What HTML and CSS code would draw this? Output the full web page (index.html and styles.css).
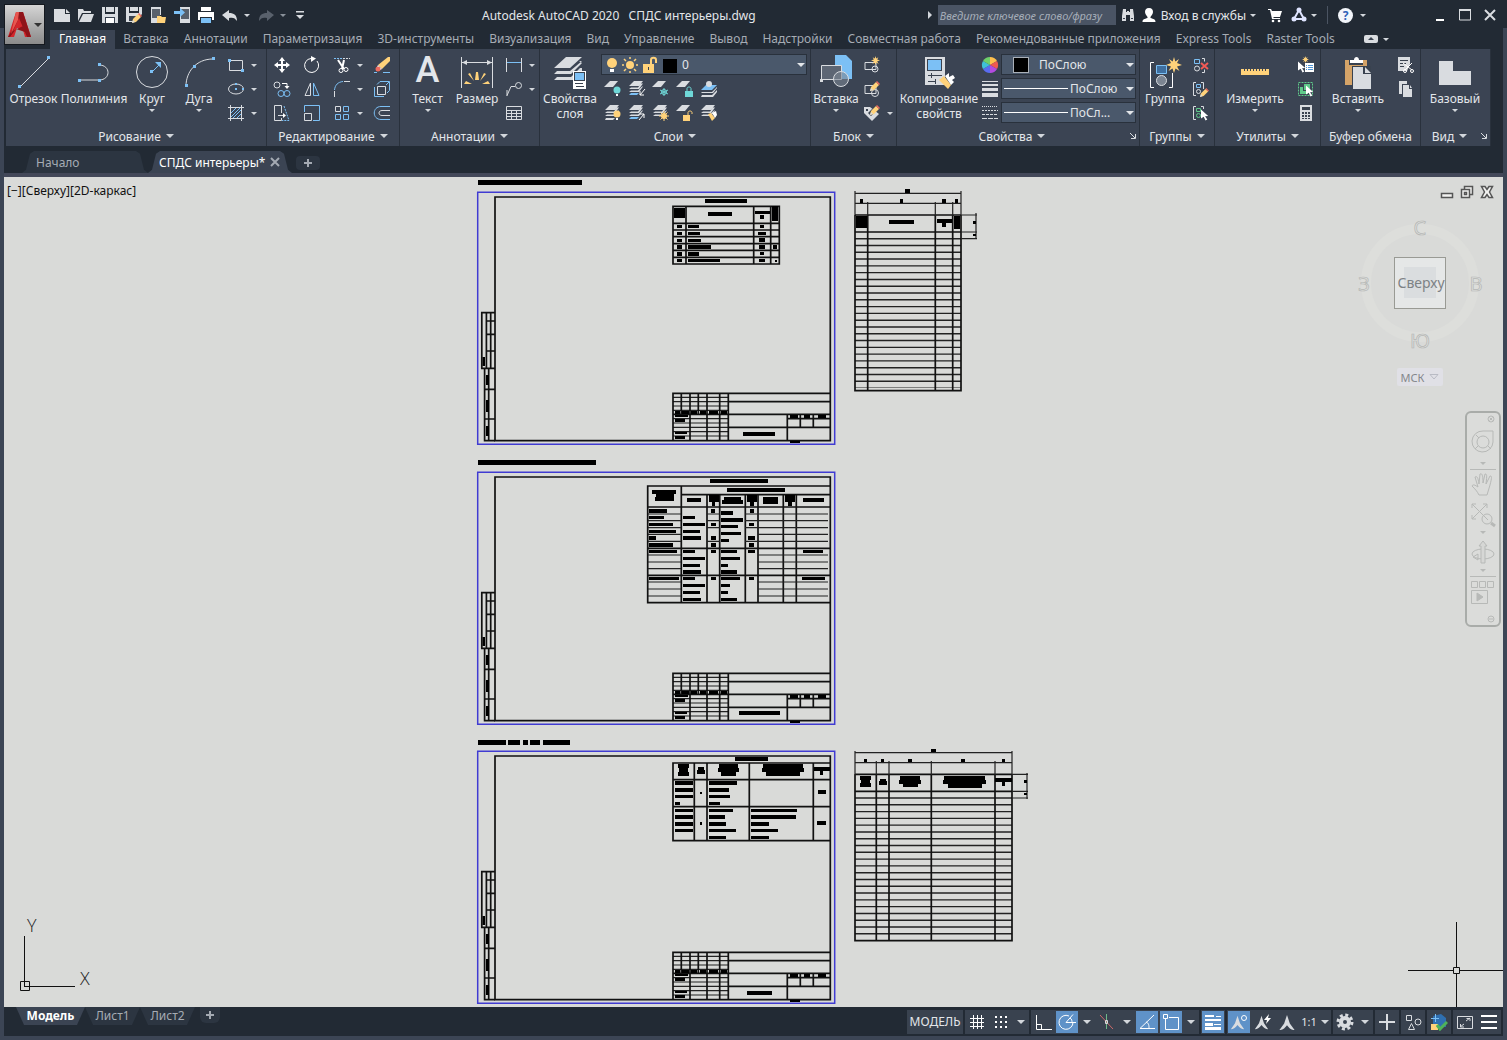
FILE: index.html
```html
<!DOCTYPE html>
<html lang="ru">
<head>
    <meta charset="UTF-8">
    <meta name="viewport" content="width=device-width, initial-scale=1.0">
    <title>Autodesk AutoCAD 2020 - СПДС интерьеры.dwg</title>
    <link rel="stylesheet" href="styles.css">
</head>
<body>
    <!-- Общие значки -->
    <svg class="defs" aria-hidden="true">
        <symbol id="layers" viewBox="0 0 18 18">
            <path class="fl" d="M6 1h9l-4 5H1zM3 7.500h7l3-4h2l-4 5.500H1zM3 10.500h7l4-4h1l-4 5.500H1z"/>
        </symbol>
        <symbol id="sheet1" viewBox="0 0 18 18"><path class="fl" d="M6 1h8L9 7H0z"/></symbol>
        <symbol id="pencil" viewBox="0 0 10 10">
            <path class="fy" d="M0 10l1-4 5-5 3 3-5 5z"/><path class="fr" d="M6 1l1-1 3 3-1 1z"/><path class="fl" d="M0 10l1-3 2 2z"/>
        </symbol>
        <symbol id="cursor" viewBox="0 0 10 12"><path class="fw" d="M0 0l8 7-3.500.500L7 11l-2 1-2-4-3 2z"/></symbol>
        <symbol id="spark" viewBox="0 0 16 16">
            <path class="fy" d="M8 0l1.300 4.500L13 2l-2 4 5 2-5 1.500L13.500 14 9.500 11.500 8 16 6.500 11.500 2.500 14 5 9.500 0 8l5-2-2-4 3.700 2.500z"/>
        </symbol>
        <symbol id="compass" viewBox="0 0 18 18"><path class="fl" d="M9 1l3 9 5 7c-3 0-5-1-8-5-3 4-5 5-8 5l5-7z"/></symbol>
    </svg>

    <header class="titlebar">
        <button class="app-button" aria-label="Меню приложения">
            <svg width="24" height="28" viewBox="0 0 24 28"><path fill="#d3262b" d="M8 1h7l8 25h-6l-2-7-6-2-3 9H0z"/><path fill="#8f1319" d="M11 1h4l8 25h-4L11 7 5 20l10-5 2 6-9-3-6 8H0l8-14z"/><path fill="#e8554f" d="M8 1h3l-1 8-7 14z"/></svg>
            <i class="arr dark"></i>
        </button>
        <div class="quick">
            <button aria-label="Создать"><svg width="18" height="18"><path class="fl" d="M1 3h11v5h5v8H1zM13 3l4 4h-4z"/></svg></button>
            <button aria-label="Открыть"><svg width="18" height="18"><path class="fl" d="M1 3h5l1 2h7v2H5l-4 8zM6 8h11l-3 8H2z"/></svg></button>
            <button aria-label="Сохранить"><svg width="18" height="18"><path class="fl" d="M1 1h3v7h10V1h3v16H1zM5 1h8v5H5z"/><path class="dk" d="M4 11h10v6H4z"/><path class="fw" d="M5 12h8v5H5z"/></svg></button>
            <button aria-label="Сохранить как"><svg width="18" height="18"><path class="fl" d="M1 1h3v6h10V1h3v7l-7 8H1zM5 1h8v4H5z"/><path class="dk" d="M4 10h8v5H4z"/><use href="#pencil" x="7" y="7" width="10" height="10"/></svg></button>
            <button aria-label="Открыть с устройства"><svg width="18" height="18"><path class="fl" d="M2 1h10v8H8v8H2z"/><path fill="#59616c" d="M3 3h8v9H3z"/><path class="fy" d="M8 10h4l1 1h4l-1 6H8z"/></svg></button>
            <button aria-label="Сохранить на устройстве"><svg width="18" height="18"><path class="fl" d="M7 1h10v16H7z"/><path fill="#59616c" d="M8 3h8v10H8z"/><path class="fb" d="M1 5h6V2l5 4.500L7 11V8H1z"/></svg></button>
            <button aria-label="Печать"><svg width="18" height="18"><path class="fw" d="M4 1h10v4H4zM1 6h16v8h-2v-3H3v3H1z"/><path class="fb" d="M4 12h10v5H4z"/></svg></button>
            <button aria-label="Отменить"><svg width="18" height="18"><path class="fl" d="M1 9l7-5v3c5 0 8 2 8 8-2-3-4-4-8-3v3z"/></svg></button>
            <i class="arr"></i>
            <button aria-label="Повторить"><svg width="18" height="18"><path fill="#59616c" d="M17 9l-7-5v3c-5 0-8 2-8 8 2-3 4-4 8-3v3z"/></svg></button>
            <i class="arr grey"></i>
            <button class="more" aria-label="Настройка панели"><svg width="10" height="10"><path class="fl" d="M1 1h8v1.500H1zM1 5h8L5 9z"/></svg></button>
        </div>
        <h1>Autodesk AutoCAD 2020 <span>СПДС интерьеры.dwg</span></h1>
        <div class="services">
            <i class="tri-right"></i>
            <input type="text" aria-label="Поиск" placeholder="Введите ключевое слово/фразу">
            <button class="w24" aria-label="Найти"><svg width="16" height="16"><path class="fl" d="M3 2h3v3h1V4h2v1h1V2h3l1 7v5h-4V8H6v6H2V9z"/><path class="dk" d="M3 11h2v1H3zM11 11h2v1h-2z"/></svg></button>
            <button class="sign"><svg width="16" height="16"><path class="fw" d="M8 1c3 0 4 2 4 4S10 9 9.500 10v1c3 1 5 1 5 4h-13c0-3 2-3 5-4v-1C6 9 4 7 4 5s1-4 4-4z"/></svg>Вход в службы<i class="arr"></i></button>
            <button class="w24" aria-label="Магазин"><svg width="16" height="16"><path class="fw" d="M1 2h3l1 2h10l-2 6H6l1 1h6v1H5L3 3H1z"/><circle class="fw" cx="6" cy="14" r="1.300"/><circle class="fw" cx="12" cy="14" r="1.300"/></svg></button>
            <button class="w24" aria-label="A360"><svg width="16" height="16"><path fill="none" stroke="#dfe4ff" stroke-width="2" d="M8 3l5 9H3z"/><circle fill="#dfe4ff" cx="8" cy="3" r="2.500"/><circle fill="#dfe4ff" cx="3" cy="12" r="2.500"/><circle fill="#dfe4ff" cx="13" cy="12" r="2.500"/></svg></button>
            <i class="arr"></i>
            <span class="divider"></span>
            <button class="help" aria-label="Справка">?</button>
            <i class="arr"></i>
        </div>
        <div class="window-buttons">
            <button aria-label="Свернуть"><svg width="14" height="14"><path class="fw" d="M3 11h8v2H3z"/></svg></button>
            <button aria-label="Развернуть"><svg width="14" height="14"><path class="sl" d="M1.500 2v10h11V2z"/><path class="fl" d="M1 1h12v2H1z"/></svg></button>
            <button aria-label="Закрыть"><svg width="14" height="14"><path class="sl thick" d="M2 2l10 10M12 2L2 12"/></svg></button>
        </div>
    </header>

    <div class="frame">
        <nav class="ribbon-tabs">
            <a href="#" class="active">Главная</a>
            <a href="#">Вставка</a>
            <a href="#">Аннотации</a>
            <a href="#">Параметризация</a>
            <a href="#">3D-инструменты</a>
            <a href="#">Визуализация</a>
            <a href="#">Вид</a>
            <a href="#">Управление</a>
            <a href="#">Вывод</a>
            <a href="#">Надстройки</a>
            <a href="#">Совместная работа</a>
            <a href="#">Рекомендованные приложения</a>
            <a href="#">Express Tools</a>
            <a href="#">Raster Tools</a>
            <button class="minimize" aria-label="Свернуть ленту"><svg width="14" height="8"><rect class="fl" width="14" height="8" rx="2"/><path class="dk" d="M4 5h6L7 2z"/></svg><i class="arr"></i></button>
        </nav>

        <div class="ribbon">
            <section class="panel p-draw">
                <div class="tools">
                    <button class="big w55"><svg width="34" height="34"><path class="sl" d="M3 32L32 3"/><path class="fb" d="M1 30h3v3H1zM30 1h3v3h-3z"/></svg>Отрезок</button>
                    <button class="big w66"><svg width="34" height="34"><path class="sl" d="M2 25h20c12 0 12-15 0-15"/><path class="fb" d="M1 24h3v3H1zM21 24h3v3h-3zM21 8h3v3h-3z"/></svg>Полилиния</button>
                    <button class="big w50"><svg width="34" height="34"><circle class="sl" cx="17" cy="17" r="15.500"/><path class="sb" d="M17 17l7-7"/><path class="fb" d="M15 15h3v3h-3zM26 7v6l-6-6z"/></svg>Круг<i class="arr"></i></button>
                    <button class="big w44"><svg width="34" height="34"><path class="sl" d="M4 31C4 17 14 4 31 4"/><path class="fb" d="M3 29h3v3H3zM11 10h3v3h-3zM30 2h3v3h-3z"/></svg>Дуга<i class="arr"></i></button>
                    <div class="grid g-drop">
                        <button class="drop" aria-label="Прямоугольник"><svg width="18" height="18"><path class="sl" d="M2.500 4.500h13v10h-13z"/><path class="fb" d="M1 3h3v3H1zM14 13h3v3h-3z"/></svg><i class="arr"></i></button>
                        <button class="drop" aria-label="Эллипс"><svg width="18" height="18"><ellipse class="sl" cx="9" cy="9" rx="7.500" ry="5"/><path class="fb" d="M8 8h2v2H8zM8 3h2v2H8zM15 8h2v2h-2z"/></svg><i class="arr"></i></button>
                        <button class="drop" aria-label="Штриховка"><svg width="18" height="18"><path class="sb" d="M4 9l5-5M4 13l9-9M6 14l8-8M10 14l4-4"/><path class="sl" d="M3.500 1v16M14.500 1v16M1 3.500h16M1 14.500h16"/></svg><i class="arr"></i></button>
                    </div>
                </div>
                <button class="caption">Рисование<i class="arr wide"></i></button>
            </section>

            <section class="panel p-edit">
                <div class="tools">
                    <div class="grid g-edit">
                        <button aria-label="Перенести"><svg width="18" height="18"><path class="fw" d="M9 1l3 4h-2v3h3V6l4 3-4 3v-2h-3v3h2l-3 4-3-4h2v-3H5v2L1 9l4-3v2h3V5H6z"/></svg></button>
                        <button aria-label="Повернуть"><svg width="18" height="18"><path class="sw" d="M14 5a7 7 0 1 1-6-2.500"/><path class="fw" d="M8 0l5 2.500L8 6z"/></svg></button>
                        <button class="drop" aria-label="Обрезать"><svg width="18" height="18"><path class="sb dash" d="M1 2.500h8"/><path class="sl dash" d="M10 2.500h7"/><path class="sw thick" d="M5 4l6 9M11 4l-2 9"/><circle class="sw" cx="8" cy="14.500" r="2"/><circle class="sw" cx="13" cy="13.500" r="2"/></svg><i class="arr"></i></button>
                        <button aria-label="Стереть"><svg width="18" height="18"><path class="fy" d="M15 1h2v4L9 13 5 9z"/><path class="fw" d="M5 9l4 4-2 1-3-3z"/><circle class="fr" cx="5" cy="13" r="2.500"/><path class="sb" d="M1 16.500h3M10 16.500h7"/></svg></button>
                        <button aria-label="Копировать"><svg width="18" height="18"><circle class="sl" cx="4" cy="5" r="3"/><circle class="sb" cx="8" cy="13.500" r="3"/><circle class="sb" cx="14" cy="13.500" r="3"/><path class="sw" d="M9 3.500h5V7"/><path class="fw" d="M11.500 6h5L14 9z"/></svg></button>
                        <button aria-label="Зеркало"><svg width="18" height="18"><path class="sl" d="M7.500 3v12.500H2z"/><path class="sb" d="M10.500 3v12.500H16z"/></svg></button>
                        <button class="drop" aria-label="Сопряжение"><svg width="18" height="18"><path class="sb" d="M1.500 10C2 5 5 2 10 1.500"/><path class="sl" d="M1.500 11v6M11 1.500h6"/></svg><i class="arr"></i></button>
                        <button aria-label="Расчленить"><svg width="18" height="18"><path class="sl" d="M4.500 6.500h8v8h-8z"/><path class="sb" d="M1.500 7v9.500H11M4 4.500l3-3h9.500v9L14 13M16 2l-3 3"/></svg></button>
                        <button aria-label="Растянуть"><svg width="18" height="18"><path class="sl" d="M8.500 9V1.500h-7v15h7V14M5 11.500h6"/><path class="fw" d="M10 9l3 2.500L10 14z"/><path class="sb dash" d="M11 2l5 14.500H9"/></svg></button>
                        <button aria-label="Масштаб"><svg width="18" height="18"><path class="sb" d="M1.500 8V1.500h15v15H10"/><path class="sl" d="M1.500 9.500h7v7h-7z"/></svg></button>
                        <button class="drop" aria-label="Массив"><svg width="18" height="18"><path class="sl" d="M2.500 2.500h5v5h-5z"/><path class="sb" d="M10.500 2.500h5v5h-5zM2.500 10.500h5v5h-5zM10.500 10.500h5v5h-5z"/></svg><i class="arr"></i></button>
                        <button aria-label="Подобие"><svg width="18" height="18"><path class="sb" d="M17 2.500H8c-9 0-9 13 0 13h9"/><path class="sl" d="M17 6.500H9c-4 0-4 5 0 5h8"/></svg></button>
                    </div>
                </div>
                <button class="caption">Редактирование<i class="arr wide"></i></button>
            </section>

            <section class="panel p-note">
                <div class="tools">
                    <button class="big w55"><span class="letter">A</span>Текст<i class="arr"></i></button>
                    <button class="big w44"><svg width="34" height="34"><path class="sl" d="M1.500 2v31M32.500 2v31M2 7.500h30"/><path class="fl" d="M2 7.500l5-2.500v5zM32 7.500L27 5v5z"/><path class="fy" d="M16 17h2l1 8h-4zM8 19l2-1 4 8zM26 19l-2-1-4 8zM4 29h8l-6-3zM30 29h-8l6-3z"/></svg>Размер</button>
                    <div class="grid g-drop">
                        <button class="drop" aria-label="Линейный"><svg width="18" height="18"><path class="sl" d="M1.500 2v14M16.500 2v14"/><path class="sb" d="M2 6.500h14"/></svg><i class="arr"></i></button>
                        <button class="drop" aria-label="Выноска"><svg width="18" height="18"><circle class="sl" cx="13.500" cy="5.500" r="3"/><path class="sl" d="M10 6.500H6l-4 9M2 10v6"/></svg><i class="arr"></i></button>
                        <button aria-label="Таблица"><svg width="18" height="18"><path class="sl" d="M1.500 2.500h15v13h-15zM2 6.500h14M2 9.500h14M2 12.500h14M6.500 6v9M11.500 6v9"/></svg></button>
                    </div>
                </div>
                <button class="caption">Аннотации<i class="arr wide"></i></button>
            </section>

            <section class="panel p-layers">
                <div class="tools">
                    <button class="big w60"><svg width="34" height="34"><path class="fl" d="M13 2h16L17 13H1zM4 16h13L29 6h-3l3 2-11 11H1zM4 22h14l9-9h2v3l-9 9H1z"/><path class="fw" d="M20 16h13v18H20z"/><path class="dk" d="M21 17h11v9H21zM22 28h8v1h-8zM23 31h8v1h-8z"/><path class="fb" d="M22 18h9v7h-9z"/></svg>Свойства слоя</button>
                    <div class="stack">
                        <label class="combo layer-combo">
                            <svg width="80" height="18" viewBox="0 0 80 18"><circle class="fy" cx="10" cy="7" r="5"/><path class="fw" d="M8 13h4v3H8z"/><circle class="fy" cx="28" cy="9" r="4"/><path stroke="#ffd27a" stroke-width="1.500" d="M28 1v2M28 15v2M20 9h2M34 9h2M22 3l2 2M34 3l-2 2M22 15l2-2M34 15l-2-2"/><path class="fy" d="M41 8h11v9H41z"/><path fill="none" stroke="#ffd27a" stroke-width="2" d="M49 8V4c0-3 5-3 5 0v3"/><path class="dk" d="M46 11h1v3h-1z"/><path d="M61 3h14v14H61z"/></svg>
                            <select aria-label="Слой"><option>0</option></select>
                        </label>
                        <div class="grid g-layer">
                            <button aria-label="Отключить"><svg width="18" height="18"><use href="#sheet1" width="18" height="18"/><circle class="fc" cx="13" cy="10" r="3.500"/><path class="fw" d="M12 14h2v2h-2z"/></svg></button>
                            <button aria-label="Изолировать"><svg width="18" height="18"><use href="#layers" width="18" height="18"/><path class="fb" d="M3 13h8l-2 2H1z"/><path class="sw" d="M17 9l-5 6M12 11v4h4"/></svg></button>
                            <button aria-label="Заморозить"><svg width="18" height="18"><use href="#sheet1" width="18" height="18"/><path class="sc" d="M12 8v8M8 10l8 4M16 10l-8 4"/><circle class="sc" cx="12" cy="12" r="2.500"/></svg></button>
                            <button aria-label="Блокировать"><svg width="18" height="18"><use href="#sheet1" width="18" height="18"/><path class="fc" d="M9 11h8v6H9z"/><path class="sc" d="M11 11V8.500c0-2 4-2 4 0V11"/></svg></button>
                            <button aria-label="Сделать текущим"><svg width="18" height="18"><path class="fb" d="M6 5h11l-5 5H1z"/><circle class="fl" cx="9" cy="4" r="3"/><path class="fl" d="M2 12h10l5-5v1l-4 5H1zM2 15h10l5-5v2l-4 5H1z"/></svg></button>
                            <button aria-label="Включить все"><svg width="18" height="18"><use href="#layers" width="18" height="18"/><path class="fl" d="M2 14h9l-2 2H1z"/><circle class="fy" cx="13" cy="10" r="3.500"/><path class="fw" d="M12 14h2v2h-2z"/></svg></button>
                            <button aria-label="Отменить изоляцию"><svg width="18" height="18"><use href="#layers" width="18" height="18"/><path class="fb" d="M3 13h8l-2 2H1z"/><path class="sw" d="M11 16l5-6M12 10h4v4"/></svg></button>
                            <button aria-label="Разморозить все"><svg width="18" height="18"><use href="#layers" width="18" height="18"/><circle class="fy" cx="12" cy="12" r="3"/><path class="sy" d="M12 7v10M7 12h10M8.500 8.500l7 7M15.500 8.500l-7 7"/></svg></button>
                            <button aria-label="Разблокировать"><svg width="18" height="18"><use href="#sheet1" width="18" height="18"/><path class="fy" d="M7 11h7v6H7z"/><path class="sy" d="M12 11V8.500c0-2 4-2 4 0V10"/></svg></button>
                            <button aria-label="Копировать свойства слоя"><svg width="18" height="18"><use href="#layers" width="18" height="18"/><path class="fy" d="M8 10l3-1 4 5-3 3z"/><path class="fw" d="M12 9l4-2 1 4-2 3z"/></svg></button>
                        </div>
                    </div>
                </div>
                <button class="caption">Слои<i class="arr wide"></i></button>
            </section>

            <section class="panel p-block">
                <div class="tools">
                    <button class="big w50"><svg width="34" height="34"><path class="fb" d="M16 0h11l6 6v18H16z"/><path fill="#5d6674" stroke="#d9dce0" d="M2.500 10.500h20v14h-20z"/><circle fill="#7c8592" fill-opacity=".6" stroke="#d9dce0" cx="22" cy="24" r="7.500"/><path class="fl" d="M1 24h3v3H1z"/></svg>Вставка<i class="arr"></i></button>
                    <div class="grid g-drop">
                        <button aria-label="Создать блок"><svg width="18" height="18"><path class="sl" d="M2 6.500h11v7H2z"/><circle class="sl" cx="12" cy="13" r="3"/><use href="#spark" x="8" y="0" width="9" height="9"/></svg></button>
                        <button aria-label="Редактор блоков"><svg width="18" height="18"><path class="sl" d="M2 5.500h11v8H2z"/><circle class="sl" cx="12" cy="13" r="3.500"/><use href="#pencil" x="7" y="1" width="10" height="10"/></svg></button>
                        <button class="drop" aria-label="Атрибуты"><svg width="18" height="18"><path class="fl" d="M1 3h6l9 7-7 7-8-8z"/><path class="dk" d="M3 5h2v2H3zM5 9l3 3 5-5-4-2z"/><use href="#pencil" x="7" y="1" width="10" height="10"/></svg><i class="arr"></i></button>
                    </div>
                </div>
                <button class="caption">Блок<i class="arr wide"></i></button>
            </section>

            <section class="panel p-props">
                <div class="tools">
                    <button class="big w84"><svg width="34" height="34"><path class="fl" d="M3 2h20v28H3z"/><path class="dk" d="M5 4h15v12H5zM6 20h14v1H6zM6 26h8v1H6zM9 18h1v5H9zM13 24h1v5h-1z"/><path class="fb" d="M6 5h13v10H6z"/><path class="fy" d="M17 25l5-4 7 9-3 4z"/><path class="fw" d="M23 21l4-3v4l4-2 2 3-3 2 2 2-3 3z"/></svg>Копирование свойств</button>
                    <div class="props-grid">
                        <svg width="18" height="18" viewBox="0 0 18 18"><path fill="#ffc04d" d="M9 9L9 1a8 8 0 0 1 7 4z"/><path fill="#ef5a50" d="M9 9l7-4a8 8 0 0 1 0 8z"/><path fill="#b44be0" d="M9 9l7 4a8 8 0 0 1-7 4z"/><path fill="#5a6cf0" d="M9 9v8a8 8 0 0 1-7-4z"/><path fill="#3fc1d8" d="M9 9l-7 4a8 8 0 0 1 0-8z"/><path fill="#6fd06a" d="M9 9L2 5a8 8 0 0 1 7-4z"/></svg>
                        <label class="combo"><i class="swatch"></i><select aria-label="Цвет"><option>ПоСлою</option></select></label>
                        <svg width="18" height="18"><path class="fl" d="M1 1h16v1H1zM1 4h16v2H1zM1 8h16v3H1zM1 13h16v4H1z"/></svg>
                        <label class="combo"><i class="line"></i><select aria-label="Вес линий"><option>ПоСлою</option></select></label>
                        <svg width="18" height="18"><path class="sl" stroke-dasharray="1 1" d="M1 2.500h16"/><path class="sl" stroke-dasharray="2 1" d="M1 6.500h16"/><path class="sl" stroke-dasharray="3 1" d="M1 10.500h16"/><path class="sl" stroke-dasharray="5 1" d="M1 14.500h16"/></svg>
                        <label class="combo"><i class="line"></i><select aria-label="Тип линий"><option>ПоСл...</option></select></label>
                    </div>
                </div>
                <div class="caption-row"><button class="caption">Свойства<i class="arr wide"></i></button><button class="launch" aria-label="Палитра свойств"><svg width="6" height="6"><path class="sl" d="M0 0l5 5M5.500 1v4.500H1"/></svg></button></div>
            </section>

            <section class="panel p-groups">
                <div class="tools">
                    <button class="big w50"><svg width="34" height="34"><path class="sw" d="M6 7.500H2.500v25H6M21 32.500h3.500V18"/><path fill="#3f6f9f" stroke="#7cc0f5" d="M8.500 10.500h10v8h-10z"/><circle fill="#7c8592" stroke="#d9dce0" cx="13.500" cy="25.500" r="5"/><use href="#spark" x="18" y="2" width="16" height="16"/></svg>Группа</button>
                    <div class="grid g-one">
                        <button aria-label="Разгруппировать"><svg width="18" height="18"><path class="sb" d="M2.500 3.500h5v4h-5z"/><circle class="sl" cx="5" cy="12.500" r="2.500"/><path class="sl" d="M10 2.500h2.500v3M10 16.500h2.500v-3"/><path stroke="#f25a55" stroke-width="2" d="M9 7l7 6M16 7l-7 6"/></svg></button>
                        <button aria-label="Редактировать группу"><svg width="18" height="18"><path class="sl" d="M4 2.500H1.500v13H4M9 2.500h2.500V9"/><path class="sb" d="M4.500 4.500h4v3h-4z"/><circle class="sl" cx="6.500" cy="11.500" r="2"/><use href="#pencil" x="8" y="8" width="9" height="9"/></svg></button>
                        <button aria-label="Выбор групп"><svg width="18" height="18"><path class="sl" d="M4 2.500H1.500v13H4M9 2.500h2.500V5"/><path class="sg" d="M4.500 4.500h4v3h-4z"/><circle class="sg" cx="6.500" cy="11.500" r="2"/><use href="#cursor" x="9" y="5" width="9" height="12"/></svg></button>
                    </div>
                </div>
                <button class="caption">Группы<i class="arr wide"></i></button>
            </section>

            <section class="panel p-utils">
                <div class="tools">
                    <button class="big w80"><svg width="34" height="34"><path class="fy" d="M3 14h28v6H3z"/><path stroke="#3b4453" d="M6.500 14v2M9.500 14v2M12.500 14v2M15.500 14v2M18.500 14v2M21.500 14v2M24.500 14v2M27.500 14v2"/></svg>Измерить<i class="arr"></i></button>
                    <div class="grid g-one">
                        <button aria-label="Быстрый выбор"><svg width="18" height="18"><use href="#cursor" x="1" y="5" width="9" height="12"/><use href="#spark" x="5" y="0" width="7" height="7"/><path class="fw" d="M8 7h9v9H8z"/><path stroke="#4d94d6" d="M9 9.500h1M11 9.500h5M9 11.500h1M11 11.500h5M9 13.500h1M11 13.500h5"/></svg></button>
                        <button aria-label="Выбрать все"><svg width="18" height="18"><path class="sg dash" d="M1.500 2.500h14v13h-14z"/><path fill="#5fc98a" d="M3 7h3v4h5v3H3zM7 4h6v6H7z"/><use href="#cursor" x="9" y="5" width="9" height="12"/></svg></button>
                        <button aria-label="Калькулятор"><svg width="18" height="18"><path class="fl" d="M3 1h12v16H3z"/><path class="dk" d="M5 3h8v3H5zM5 8h2v2H5zM8 8h2v2H8zM11 8h2v2h-2zM5 11h2v2H5zM8 11h2v2H8zM11 11h2v2h-2zM5 14h2v1H5zM8 14h2v1H8zM11 14h2v1h-2z"/></svg></button>
                    </div>
                </div>
                <button class="caption">Утилиты<i class="arr wide"></i></button>
            </section>

            <section class="panel p-clip">
                <div class="tools">
                    <button class="big w74"><svg width="34" height="34"><path fill="#d5a468" d="M4 5h22v25H4z"/><path class="dk" d="M8 5h14v5H8zM11 11h19v22H11z"/><path class="fw" d="M9 5h4c0-4 5-4 5 0h4v3H9z"/><path class="fl" d="M12 12h10v7h8v15H12zM24 12l6 6h-6z"/></svg>Вставить<i class="arr"></i></button>
                    <div class="grid g-one">
                        <button aria-label="Вырезать"><svg width="18" height="18"><path class="fl" d="M1 1h12v7l-3 7H1z"/><path class="dk" d="M3 4h8v1H3zM3 7h6v1H3zM3 10h4v1H3z"/><path class="sw" d="M6 7l9 7M15 7l-7 7"/><circle class="sw" cx="8" cy="15" r="1.500"/><circle class="sw" cx="15" cy="15" r="1.500"/></svg></button>
                        <button aria-label="Копировать"><svg width="18" height="18"><path class="fl" d="M2 1h8v3H5v10H2zM6 5h6v4h3v8H6zM13 5l2 3h-2z"/></svg></button>
                    </div>
                </div>
                <span class="caption">Буфер обмена</span>
            </section>

            <section class="panel p-view">
                <div class="tools">
                    <button class="big w68"><svg width="34" height="34"><path class="fl" d="M1 6h14v10h18v14H1z"/></svg>Базовый<i class="arr"></i></button>
                </div>
                <div class="caption-row"><button class="caption">Вид<i class="arr wide"></i></button><button class="launch" aria-label="Параметры вида"><svg width="6" height="6"><path class="sl" d="M0 0l5 5M5.500 1v4.500H1"/></svg></button></div>
            </section>
        </div>

        <nav class="file-tabs">
            <a href="#">Начало</a>
            <a href="#" class="active">СПДС интерьеры* <svg width="10" height="10"><path stroke="#a4aab3" stroke-width="2" d="M1 1l8 8M9 1L1 9"/></svg></a>
            <button aria-label="Новый чертеж"><svg width="10" height="10"><path stroke="#a4aab3" stroke-width="2" d="M5 1v8M1 5h8"/></svg></button>
        </nav>

        <main class="canvas">
            <!-- Чертеж: рамки листов, штампы и таблицы -->
            <svg class="drawing">
                <defs>
                    <g id="sheet">
                        <path class="border" d="M.7.300h357v252H.7z"/>
                        <path class="bold" d="M18 5h335.300v243.600H18z"/>
                        <path class="bold" d="M18 120.600H4.800v55.700H18M9.400 120v56M13.700 120v56M9 129h9M9 142.400h9M9 159h9M7.600 176v72.600H18M11.700 176v72M7.600 197.300H18M7.600 227H18"/>
                        <path class="ink" d="M5.500 165H8v9H5.500zM9 183h3v10H9zM9 208h3v12H9zM9 234h3v10H9z"/>
                        <path class="thin" d="M196 205.300h55M196 209.700h55M196 214h55M196 226.700h55M196 231h55M196 235.300h55M196 239.700h55M196 244h55M196 218.300h55"/>
                        <path class="bold" d="M353 201.300H196v47M204.300 201v21M213 201v47M221.300 201v21M230 201v47M242.700 201v47M251.300 201v47M251 209.700h102M196 222.300h157M251 235.300h102M310.300 222v26M310 226.700h43M323.300 222v13M336.300 222v13"/>
                        <path class="ink" d="M198 219h5v3h-5zM205 219h7v3h-7zM214 219h6v3h-6zM223 219h6v3h-6zM232 219h9v3h-9zM244 219h6v3h-6zM198 223h13v2h-13zM198 227h10v3h-10zM198 240h12v2h-12zM198 244h10v3h-10zM313 223h8v3h-8zM327 223h6v3h-6zM341 223h8v3h-8zM313 249h10v2h-10z"/>
                    </g>
                </defs>
                <!-- начало координат сдвинуто к углу окна -->
                <g transform="translate(-4 -177)">
                    <path class="ink" d="M478 180h104v5H478zM478 460h118v5H478zM478 740h28v5h-28zM508 740h12v5h-12zM523 740h5v5h-5zM530 740h10v5h-10zM543 740h27v5h-27z"/>

                    <g transform="translate(477 192)">
                        <use href="#sheet"/>
                        <path class="bold" d="M196 14.300h106.300V72H196zM209 14v58M276.700 14v58M293.700 14v58M196 31.300h106M196 38h106M196 44.700h106M196 51.700h106M196 58.300h106M196 65.300h106"/>
                        <path class="ink" d="M266 240h32v4h-32zM228 7h42v4h-42zM197 16h11v10h-11zM231 20h24v4h-24zM278 19h15v3h-15zM283 23h4v4h-4zM295 14h6v15h-6z"/>
                        <path class="ink" d="M200 33h5v3h-5zM200 40h5v3h-5zM200 47h5v3h-5zM200 53h5v4h-5zM200 60h5v4h-5zM200 67h5v3h-5zM211 33h11v3h-11zM211 40h12v3h-12zM211 47h13v3h-13zM211 53h23v4h-23zM211 60h11v4h-11zM211 67h32v3h-32z"/>
                        <path class="ink" d="M283 33h4v3h-4zM281 40h8v3h-8zM282 46h6v4h-6zM282 53h6v4h-6zM283 60h4v3h-4zM282 67h6v3h-6zM296 53h4v4h-4zM298 68h2v2h-2z"/>
                    </g>

                    <g transform="translate(477 472)">
                        <use href="#sheet"/>
                        <path class="bold" d="M353 14H170.700v116.700H353M204.300 14v117M204 22.700h149M170 35h183M230 22v109M242.700 22v109M268.300 22v109M281 22v109M306.300 22v109M319.300 22v109M170 76.300h183M170 103.300h183"/>
                        <path class="thin" d="M171 42h33M171 48.700h33M171 55.700h33M171 62.300h33M171 69.300h33M171 83h33M171 90h33M171 96.700h33M171 110h33M171 117h33M171 124h33M281 42h70M281 48.700h70M281 55.700h70M281 62.300h70M281 69.300h70M281 83h70M281 90h70M281 96.700h70M281 110h70M281 117h70M281 124h70M230 42h13M230 48.700h13M230 55.700h13M230 69.300h13M268 42h13M268 48.700h13M268 55.700h13M268 69.300h13"/>
                        <path class="ink" d="M262 239h41v4h-41zM233 7h58v4h-58zM250 16h58v4h-58zM175 18h24v4h-24zM179 22h18v3h-18zM178 25h19v4h-19zM210 26h14v4h-14zM232 23h10v7h-10zM235 30h3v4h-3zM247 25h17v3h-17zM245 28h21v4h-21zM270 23h10v7h-10zM273 30h4v4h-4zM286 25h15v7h-15zM308 23h10v7h-10zM311 30h4v4h-4zM326 26h21v4h-21z"/>
                        <path class="ink" d="M172 37h18v4h-18zM172 44h15v3h-15zM172 51h24v3h-24zM172 58h27v3h-27zM172 64h7v4h-7zM172 71h24v4h-24zM172 78h28v3h-28zM172 105h30v3h-30zM206 44h12v3h-12zM206 51h22v3h-22zM206 58h17v3h-17zM206 64h18v4h-18zM206 78h12v3h-12zM206 85h22v3h-22zM206 92h17v3h-17zM206 98h18v4h-18zM206 105h12v3h-12zM206 112h22v3h-22zM206 119h17v3h-17zM206 126h18v3h-18z"/>
                        <path class="ink" d="M234 37h4v4h-4zM234 51h5v3h-5zM234 64h5v4h-5zM234 71h5v4h-5zM234 78h5v3h-5zM234 105h5v3h-5zM244 39h12v4h-12zM244 46h22v4h-22zM244 53h17v3h-17zM244 60h20v3h-20zM244 67h8v3h-8zM244 78h16v3h-16zM244 85h19v3h-19zM244 92h7v3h-7zM244 98h16v4h-16zM244 105h19v3h-19zM244 112h9v3h-9zM244 119h7v3h-7zM244 126h16v3h-16z"/>
                        <path class="ink" d="M273 37h4v4h-4zM272 51h5v3h-5zM271 64h7v4h-7zM272 71h5v4h-5zM271 78h7v3h-7zM272 105h5v3h-5zM326 78h20v3h-20zM325 105h23v3h-23z"/>
                    </g>

                    <g transform="translate(477 751)">
                        <use href="#sheet"/>
                        <path class="bold" d="M353 12H196v77.600h157M217.300 12v78M230 12v78M272.300 12v78M336.300 12v78M196 28.600h157M196 55.600h157"/>
                        <path class="ink" d="M270 240h25v4h-25zM258 6h33v4h-33zM201 13h11v4h-11zM202 17h9v4h-9zM201 21h11v4h-11zM221 16h6v3h-6zM220 19h8v4h-8zM242 13h19v4h-19zM241 17h21v4h-21zM244 21h15v4h-15zM286 13h40v4h-40zM285 17h42v4h-42zM289 21h34v4h-34zM337 16h16v4h-16zM343 20h3v4h-3z"/>
                        <path class="ink" d="M198 30h18v4h-18zM198 37h18v4h-18zM198 44h18v3h-18zM198 51h5v3h-5zM232 30h28v4h-28zM232 37h20v4h-20zM232 44h21v3h-21zM232 51h11v3h-11zM223 41h2v2h-2zM341 39h8v4h-8zM198 58h18v3h-18zM198 64h18v4h-18zM198 71h18v4h-18zM198 78h18v3h-18zM223 71h2v3h-2zM340 70h9v4h-9z"/>
                        <path class="ink" d="M232 58h24v3h-24zM232 64h16v4h-16zM232 71h17v4h-17zM232 78h27v3h-27zM232 85h17v3h-17zM274 58h46v3h-46zM274 64h45v4h-45zM274 71h18v4h-18zM274 78h27v3h-27zM274 85h18v3h-18z"/>
                    </g>

                    <!-- пустая таблица с размерами, вверху справа -->
                    <path class="rows" stroke-width="106" d="M908 238v150"/>
                    <path class="bold" d="M855 215v175.600h106V215M867.700 215v175M935.300 215v175M952.700 215v175M855 215h106M855 232h106"/>
                    <path class="thin" d="M855 193.300h106M855 203.300h106M855 191v24M961 191v24M867.700 202v14M935.300 202v14M952.700 202v14M961 215h16M961 232h16M961 238.700h16M976 213v26"/>
                    <path class="ink" d="M905 189h5v4h-5zM860 199h3v4h-3zM900 199h3v4h-3zM942 199h4v4h-4zM955 199h3v4h-3zM856 216h11v12h-11zM889 220h25v4h-25zM937 219h15v4h-15zM942 223h4v4h-4zM954 216h6v13h-6zM973 221h3v3h-3zM973 234h3v2h-3z"/>

                    <!-- пустая таблица с размерами, внизу справа -->
                    <path class="rows" stroke-width="157" d="M933.500 797.300v138"/>
                    <path class="bold" d="M855 774.300v166.400h157V774.300M876.300 774v166M889 774v166M931.300 774v166M995 774v166M855 774.300h157M855 791.300h157"/>
                    <path class="thin" d="M855 752.700h157M855 762.700h157M855 751v24M1012 751v24M876.300 761v14M889 761v14M931.300 761v14M995 761v14M1012 774.300h16M1012 791.300h16M1012 798h16M1027 773v26"/>
                    <path class="ink" d="M931 749h5v3h-5zM864 759h3v3h-3zM881 759h3v3h-3zM908 759h4v3h-4zM961 759h4v3h-4zM1002 759h3v3h-3zM860 776h11v4h-11zM861 780h9v3h-9zM860 783h11v4h-11zM880 779h6v3h-6zM879 781h8v4h-8zM900 776h20v4h-20zM899 780h22v4h-22zM903 784h15v3h-15zM944 776h41v4h-41zM943 780h43v4h-43zM948 784h34v4h-34zM995 778h17v4h-17zM1002 782h3v4h-3zM1024 780h3v3h-3zM1024 793h3v2h-3z"/>
                </g>
            </svg>

            <div class="view-label">[−][Сверху][2D-каркас]</div>

            <svg class="ucs" width="80" height="86"><path class="hair" d="M4.500 26v50M4 76.500h51M.5 71.500h9v9h-9z"/><text x="7" y="22">Y</text><text x="60" y="75">X</text></svg>

            <div class="doc-buttons">
                <button aria-label="Свернуть"><svg width="14" height="14"><path class="doc" d="M1.500 8.500h11v4h-11z"/></svg></button>
                <button aria-label="Восстановить"><svg width="14" height="14"><path class="doc" d="M4.500 4V1.500h8v8H10M1.500 4.500h8v8h-8z"/><path class="doc" d="M4.500 7.500h2v2h-2z"/></svg></button>
                <button aria-label="Закрыть"><svg width="14" height="14"><path class="doc" d="M1.500 1.500H5l2 3 2-3h3.500L9.500 7l3 5.500H9l-2-3-2 3H1.500l3-5.500z"/></svg></button>
            </div>

            <div class="viewcube">
                <svg width="130" height="140" viewBox="0 0 130 140">
                    <circle class="ring" cx="65" cy="68" r="54"/>
                    <rect class="face" x="39.500" y="42.500" width="51" height="51"/>
                    <rect fill="#dadddf" x="49" y="52" width="32" height="31"/>
                    <text class="side" x="65" y="20">С</text>
                    <text class="side" x="9" y="76">З</text>
                    <text class="side" x="121" y="76">В</text>
                    <text class="side" x="65" y="133">Ю</text>
                    <text class="top" x="66" y="73">Сверху</text>
                </svg>
                <button class="wcs">МСК <svg width="10" height="6"><path fill="none" stroke="#b9bbc4" d="M1 .5h8L5 5z"/></svg></button>
            </div>

            <div class="navbar">
                <svg class="nav-end" width="8" height="8"><circle cx="4" cy="4" r="3"/><path d="M2.500 2.500l3 3M5.500 2.500l-3 3"/></svg>
                <button aria-label="Штурвал"><svg width="26" height="26"><path d="M13 2h10v11a10.500 10.500 0 1 1-10-11z"/><circle cx="13" cy="13" r="6"/><path d="M5 20l3-3M18 17l3 3M6 6l3 3"/></svg></button>
                <i class="arr pale"></i>
                <hr>
                <button aria-label="Панорамирование"><svg width="26" height="26"><path d="M9 23c-2-4-4-6-7-9 1-2 3-1 6 1L5 5c2-1 3 0 4 7l1-10c2-1 3 1 3 9l2-9c2 0 2 1 1 10l4-8c2 0 2 1 0 9l-3 10z"/></svg></button>
                <button aria-label="Зумирование"><svg width="26" height="26"><path d="M2 2l16 16M17 2L2 17M2 6V2h4M13 2h4v4M2 13v4h4"/><circle cx="17" cy="17" r="5"/><path stroke-width="3" d="M21 21l4 3"/></svg></button>
                <i class="arr pale"></i>
                <button aria-label="Орбита"><svg width="26" height="26"><ellipse cx="13" cy="14" rx="11" ry="5"/><path fill="#d6d7d5" d="M11 23V6H9l4-5 4 5h-2v17z"/><path d="M3 17l5-3v6z"/></svg></button>
                <i class="arr pale"></i>
                <hr>
                <button aria-label="Аниматор"><svg width="26" height="26"><path d="M1.500 2.500h6v6h-6zM9.500 2.500h6v6h-6zM17.500 2.500h6v6h-6zM1.500 11.500h16v13h-16z"/><path fill="#b7b9b7" d="M7 14l6 4-6 4z"/></svg></button>
                <svg class="nav-end" width="8" height="8"><circle cx="4" cy="4" r="3"/><path d="M2 4h4"/></svg>
            </div>

            <svg class="crosshair" width="95" height="85"><path class="hair" d="M48.500 0v45M48.500 52v33M0 48.500h45M52 48.500h43M45.500 45.500h6v6h-6z"/></svg>
        </main>

        <footer class="statusbar">
            <nav class="layout-tabs">
                <a href="#" class="active">Модель</a>
                <a href="#">Лист1</a>
                <a href="#">Лист2</a>
                <button aria-label="Новый лист"><svg width="8" height="8"><path stroke="#a4aab3" stroke-width="2" d="M4 0v8M0 4h8"/></svg></button>
            </nav>
            <div class="modes">
                <div class="group"><button class="model">МОДЕЛЬ</button></div>
                <div class="group">
                    <button aria-label="Сетка"><svg width="18" height="18"><path class="sw" d="M5.500 2v14M9.500 2v14M13.500 2v14M2 5.500h14M2 9.500h14M2 13.500h14"/></svg></button>
                    <button aria-label="Привязка"><svg width="18" height="18"><path class="fw" d="M3 3h2v2H3zM8 3h2v2H8zM13 3h2v2h-2zM3 8h2v2H3zM8 8h2v2H8zM13 8h2v2h-2zM3 13h2v2H3zM8 13h2v2H8zM13 13h2v2h-2z"/></svg></button>
                    <button class="tiny" aria-label="Параметры привязки"><i class="arr mid"></i></button>
                </div>
                <div class="group">
                    <button aria-label="Орто"><svg width="18" height="18"><path class="sw" d="M2.500 2v14.500H18M2.500 11.500h5v5"/></svg></button>
                    <button class="on" aria-label="Полярное отслеживание"><svg width="18" height="18"><path class="sw" d="M15 9a7 7 0 1 1-4-6M8 9.500l7-8M8 9.500h10M12 5c2 1 2 3 2 5"/></svg></button>
                    <button class="tiny" aria-label="Параметры отслеживания"><i class="arr mid"></i></button>
                    <button aria-label="Изометрия"><svg width="18" height="18"><path stroke="#6fb98a" d="M8.500 1v15"/><path stroke="#cc6a6a" d="M2 2l13 14"/><path class="sl" d="M7.500 7.500h2v3h-2z"/></svg></button>
                    <button class="tiny" aria-label="Изоплоскость"><i class="arr mid"></i></button>
                    <button class="on" aria-label="Объектное отслеживание"><svg width="18" height="18"><path class="sw" d="M16 2L2 15.500h15M8 9c3 1 3 4 3 6"/></svg></button>
                    <button class="on" aria-label="Объектная привязка"><svg width="18" height="18"><path class="sw" d="M3.500 6v10.500h13V4.500H7M1.500 1.500h4v4h-4z"/></svg></button>
                    <button class="tiny" aria-label="Параметры объектной привязки"><i class="arr mid"></i></button>
                </div>
                <div class="group">
                    <button class="on" aria-label="Вес линий"><svg width="18" height="18"><path class="fw" d="M1 2h9v2H1zM1 6h16v2H1zM1 10h8v3H1zM1 14h16v3H1zM12 3h5v1h-5zM10 11h7v1h-7z"/></svg></button>
                </div>
                <div class="group">
                    <button class="on" aria-label="Видимость аннотаций"><svg width="18" height="18"><use href="#compass" y="1" width="15" height="17"/><circle class="sw" cx="14" cy="5" r="2.500"/></svg></button>
                    <button aria-label="Автомасштаб"><svg width="18" height="18"><use href="#compass" y="1" width="15" height="17"/><path class="fw" d="M15 1l-5 6h3l-1 4 5-6h-3z"/></svg></button>
                    <button aria-label="Масштаб аннотаций"><svg width="18" height="18"><use href="#compass" y="1" width="18" height="17"/></svg></button>
                    <button class="scale">1:1 <i class="arr mid"></i></button>
                </div>
                <div class="group">
                    <button aria-label="Рабочее пространство"><svg width="18" height="18"><circle fill="none" stroke="#d9dce0" stroke-width="4" cx="9" cy="9" r="4"/><circle fill="none" stroke="#d9dce0" stroke-width="3" stroke-dasharray="3 2.500" cx="9" cy="9" r="7"/></svg></button>
                    <button class="tiny" aria-label="Список пространств"><i class="arr mid"></i></button>
                </div>
                <div class="group">
                    <button aria-label="Монитор аннотаций"><svg width="18" height="18"><path class="fl" d="M8 1h2v7h7v2h-7v7H8v-7H1V8h7z"/></svg></button>
                </div>
                <div class="group">
                    <button aria-label="Изоляция объектов"><svg width="18" height="18"><path class="sl" d="M2.500 2.500h5v5h-5zM4.500 16.500h6l-3-6z"/><circle class="sl" cx="14" cy="9" r="3"/></svg></button>
                </div>
                <div class="group">
                    <button aria-label="Аппаратное ускорение"><svg width="18" height="18"><path fill="#2f6fb0" d="M3 3l8-2 5 4v9H3z"/><path class="sb" d="M1 5.500h8M5.500 1v8"/><path class="fy" d="M1 11h7v6H1z"/><path fill="none" stroke="#4fb35a" stroke-width="3" d="M7 12l3 4 7-7"/></svg></button>
                </div>
                <div class="group">
                    <button aria-label="Очистить экран"><svg width="18" height="18"><path class="sl" d="M1.500 3.500h15v12h-15zM10 8l4-3M10.500 5.500H14V8M8 11l-4 3M4.500 11v3H8"/></svg></button>
                    <button aria-label="Адаптация"><svg width="18" height="18"><path class="fw" d="M1 2h16v2H1zM1 8h16v2H1zM1 14h16v2H1z"/></svg></button>
                </div>
            </div>
        </footer>
    </div>
</body>
</html>
```
FILE: styles.css
```css
* {
    box-sizing: border-box;
}
body {
    display: flex;
    flex-direction: column;
    min-height: 100vh;
    margin: 0;
    background: #222a34;
    color: #e3e6ea;
    font: 12px/15px "Noto Sans", sans-serif;
}
button {
    display: flex;
    align-items: center;
    justify-content: center;
    margin: 0;
    padding: 0;
    border: 0;
    background: none;
    color: inherit;
    font: inherit;
}
a {
    color: inherit;
    text-decoration: none;
}
svg {
    display: block;
    flex: none;
}
.defs {
    position: absolute;
    width: 0;
    height: 0;
}

/* Цвета значков */
.fl { fill: #d9dce0; }
.fw { fill: #fff; }
.fb { fill: #7cc0f5; }
.fy { fill: #ffd27a; }
.fr { fill: #ee6a5e; }
.fc { fill: #6fd8d8; }
.dk { fill: #39424f; }
.sl, .sw, .sb, .sc, .sy, .sg { fill: none; stroke: #d9dce0; }
.sw { stroke: #fff; }
.sb { stroke: #7cc0f5; }
.sc { stroke: #6fd8d8; }
.sy { stroke: #ffd27a; }
.sg { stroke: #5fc98a; }
.thick { stroke-width: 2; }
.dash { stroke-dasharray: 2 1; }

.arr {
    flex: none;
    width: 0;
    height: 0;
    border: 3px solid transparent;
    border-top-color: #d3d7dc;
    border-bottom: 0;
}
.arr.wide, .arr.mid { border-width: 4px 4px 0; }
.arr.dark { border-top-color: #333; border-width: 4px 4px 0; }
.arr.grey { border-top-color: #8a919a; }
.arr.pale { border-top-color: #b7b9b7; }

/* Заголовок окна */
.titlebar {
    position: relative;
    display: flex;
    align-items: center;
    height: 28px;
    padding: 2px 5px 0 50px;
}
.app-button {
    position: absolute;
    z-index: 1;
    left: 5px;
    top: 5px;
    width: 39px;
    height: 39px;
    gap: 2px;
    background: linear-gradient(#d5d5d5, #8a8a8a);
    box-shadow: 0 0 0 1px #15191f;
}
.quick {
    display: flex;
    align-items: center;
}
.quick button {
    width: 24px;
    height: 24px;
}
.quick .arr + button {
    margin-left: 4px;
}
.quick .arr {
    margin-left: 2px;
}
.quick .more {
    width: 20px;
}
h1 {
    flex: 1;
    margin: 0;
    font-size: 12px;
    font-weight: normal;
    text-align: center;
}
h1 span {
    margin-left: 6px;
}
.services {
    display: flex;
    align-items: center;
}
.tri-right {
    border: 4px solid transparent;
    border-left-color: #d3d7dc;
    border-right: 0;
    margin-right: 6px;
}
.services input {
    width: 178px;
    height: 20px;
    padding: 0 2px;
    border: 0;
    background: #4a5464;
    color: #e3e6ea;
    font: italic 11px "Noto Sans", sans-serif;
}
.services input::placeholder {
    color: #a5adb8;
    opacity: 1;
}
.w24 {
    width: 24px;
}
.sign {
    gap: 4px;
    margin: 0 7px 0 1px;
}
.divider {
    width: 1px;
    height: 18px;
    margin: 0 10px;
    background: #4b5462;
}
.help {
    width: 15px;
    height: 15px;
    margin-right: 7px;
    border-radius: 50%;
    background: #f2f5fa;
    color: #2f62b8;
    font-weight: bold;
}
.window-buttons {
    display: flex;
    margin-left: 61px;
}
.window-buttons button {
    width: 25px;
}

/* Лента */
.frame {
    display: flex;
    flex: 1;
    flex-direction: column;
    border: solid #3c4555;
    border-width: 0 4px 4px;
}
.ribbon-tabs {
    display: flex;
    align-items: flex-end;
    height: 21px;
    padding-left: 46px;
    color: #a6acb4;
}
.ribbon-tabs a {
    height: 19px;
    padding: 0 7px 0 8px;
    line-height: 18px;
    white-space: nowrap;
}
.ribbon-tabs a.active {
    padding: 0 9px;
    background: #3b4453;
    color: #fff;
}
.minimize {
    gap: 5px;
    height: 20px;
    margin-left: 22px;
}
.ribbon {
    display: flex;
    margin: 0 2px;
}
.panel {
    display: flex;
    flex: none;
    flex-direction: column;
    height: 97px;
    border-right: 1px solid #29313c;
    background: #3b4453;
}
.p-draw { width: 261px; }
.p-edit { width: 133px; }
.p-note { width: 140px; }
.p-layers { width: 271px; }
.p-block { width: 86px; }
.p-props { width: 243px; }
.p-groups { width: 75px; }
.p-utils { width: 106px; }
.p-clip { width: 100px; }
.p-view { width: 70px; }
.tools {
    display: flex;
    flex: 1;
    padding-top: 4px;
}
.big {
    flex: none;
    flex-direction: column;
    justify-content: flex-start;
    align-self: flex-start;
    text-align: center;
}
.big svg {
    margin: 2px 0;
}
.big .arr {
    margin-top: 3px;
}
.letter {
    height: 38px;
    font: 500 36px/35px Roboto, sans-serif;
    color: #e3e6ea;
}
.w44 { width: 44px; }
.w50 { width: 50px; }
.w55 { width: 55px; }
.w60 { width: 60px; }
.w66 { width: 66px; }
.w68 { width: 68px; }
.w74 { width: 74px; }
.w80 { width: 80px; }
.w84 { width: 84px; }
.grid {
    display: grid;
    align-content: start;
    grid-auto-rows: 24px;
}
.grid button {
    justify-content: flex-start;
    padding-left: 6px;
}
.grid .arr {
    margin-left: 6px;
}
.g-drop { grid-template-columns: 40px; }
.g-one { grid-template-columns: 30px; }
.g-edit { grid-template-columns: 30px 30px 40px 30px; }
.g-layer { grid-template-columns: repeat(5, 24px); }
.g-layer button { padding-left: 3px; }
.stack {
    display: flex;
    flex: 1;
    flex-direction: column;
    gap: 2px;
    padding: 1px 3px 0 1px;
}
.g-one, .p-block .g-drop { margin-left: -4px; }
.combo {
    position: relative;
    display: flex;
    align-items: center;
    height: 21px;
    background: #4a586b;
    border: 1px solid #29313c;
}
.combo::after {
    content: "";
    position: absolute;
    right: 1px;
    border: 4px solid transparent;
    border-top-color: #e3e6ea;
    border-bottom: 0;
}
.combo select {
    flex: 1;
    min-width: 0;
    margin: 0;
    padding: 0;
    border: 0;
    appearance: none;
    background: none;
    color: #e3e6ea;
    font: inherit;
}
.props-grid {
    display: grid;
    flex: 1;
    grid-template-columns: 18px 1fr;
    grid-auto-rows: 21px;
    align-items: center;
    gap: 3px 2px;
    padding: 1px 3px 0 0;
}
.swatch {
    width: 16px;
    height: 16px;
    margin: 0 10px 0 11px;
    background: #000;
    border: 1px solid #aab0b8;
}
.line {
    width: 64px;
    height: 1px;
    margin: 0 2px;
    background: #fff;
}
.caption {
    display: flex;
    flex: none;
    align-items: center;
    justify-content: center;
    gap: 5px;
    height: 20px;
}
.caption-row {
    display: flex;
}
.caption-row .caption {
    flex: 1;
}
.launch {
    width: 12px;
}

/* Вкладки файлов */
.file-tabs {
    display: flex;
    align-items: flex-end;
    height: 31px;
    padding-left: 18px;
    border-bottom: 4px solid #434859;
}
.file-tabs a, .file-tabs button {
    height: 22px;
    line-height: 23px;
    background: #2c3541;
    color: #a6acb4;
    clip-path: polygon(0 100%, 4px 85%, 8px 12%, 12px 0, calc(100% - 12px) 0, calc(100% - 8px) 12%, calc(100% - 4px) 85%, 100% 100%);
}
.file-tabs a {
    width: 126px;
    padding-left: 14px;
}
.file-tabs a.active {
    display: flex;
    align-items: center;
    gap: 5px;
    width: 144px;
    padding-left: 11px;
    background: #3b4453;
    color: #fff;
}
.file-tabs button {
    width: 24px;
    height: 14px;
    margin: 0 0 3px 4px;
    border-radius: 4px;
    clip-path: none;
}

/* Поле чертежа */
.canvas {
    position: relative;
    flex: 1;
    min-height: 600px;
    overflow: hidden;
    background: #d9dad8;
    color: #111;
}
.drawing {
    position: absolute;
    width: 100%;
    height: 100%;
}
.border { fill: none; stroke: #403bd2; stroke-width: 1.500; }
.bold { fill: none; stroke: #111; stroke-width: 1.700; }
.thin { fill: none; stroke: #222; stroke-width: 1.200; }
.rows { stroke: #222; stroke-dasharray: 1.400 5.390; }
.hair { fill: none; stroke: #111; }
.view-label {
    position: absolute;
    left: 3px;
    top: 6px;
}
.ucs {
    position: absolute;
    left: 16px;
    bottom: 11px;
    fill: #222;
    font: 300 18px "Open Sans", sans-serif;
}
.doc-buttons {
    position: absolute;
    top: 8px;
    right: 9px;
    display: flex;
    gap: 6px;
}
.doc { fill: #f2f2f0; stroke: #555; stroke-width: 1.500; }
.viewcube {
    position: absolute;
    top: 38px;
    right: 18px;
    display: flex;
    flex-direction: column;
    align-items: center;
    width: 130px;
}
.viewcube text { text-anchor: middle; }
.ring { fill: none; stroke: #dddedb; stroke-width: 10; }
.face { fill: #e5e7e7; stroke: #999a94; }
.side { fill: #dcdddb; stroke: #b4b6b4; stroke-width: .7; font-size: 20px; }
.top { fill: #7d8285; font-size: 14px; }
.wcs {
    gap: 5px;
    height: 18px;
    margin-top: 13px;
    padding: 0 4px;
    background: #e0e0e6;
    border-radius: 2px;
    color: #85878c;
    font-size: 11px;
}
.navbar {
    position: absolute;
    top: 234px;
    right: 2px;
    display: flex;
    flex-direction: column;
    align-items: center;
    width: 36px;
    height: 216px;
    padding: 2px 4px;
    border: 2px solid #a9aca9;
    border-radius: 6px;
    background: #dbdcda;
}
.navbar svg {
    fill: none;
    stroke: #b7b9b7;
}
.navbar button {
    height: 30px;
}
.navbar .nav-end {
    align-self: flex-end;
}
.navbar .nav-end:last-child {
    margin-top: auto;
}
.navbar button:first-of-type {
    height: 38px;
}
.navbar .arr {
    margin: 1px 0 4px;
}
.navbar hr {
    width: 26px;
    margin: 0;
    border: 0;
    border-top: 1px solid #b7b9b7;
}
.crosshair {
    position: absolute;
    right: 0;
    bottom: 0;
}

/* Строка состояния */
.statusbar {
    display: flex;
    justify-content: space-between;
    height: 29px;
    padding: 0 2px 0 12px;
}
.layout-tabs {
    display: flex;
    color: #a6acb4;
}
.layout-tabs a {
    width: 55px;
    height: 18px;
    background: #2c3541;
    line-height: 18px;
    text-align: center;
    clip-path: polygon(0 0, 100% 0, calc(100% - 8px) 100%, 8px 100%);
}
.layout-tabs a.active {
    width: 69px;
    background: #3b4453;
    color: #fff;
    font-weight: bold;
}
.layout-tabs button {
    width: 20px;
    height: 16px;
    margin-left: 5px;
    border-radius: 0 0 6px 6px;
    background: #2c3541;
}
.modes {
    display: flex;
    align-items: center;
    gap: 2px;
}
.group {
    display: flex;
    height: 24px;
    background: #39424f;
}
.group button {
    width: 24px;
    height: 24px;
    padding: 1px;
    background-clip: content-box;
}
.group .on {
    background-color: #5f92c8;
}
.group .tiny { width: 16px; }
.group .model { width: 56px; }
.group .scale {
    gap: 4px;
    width: 32px;
    font-size: 11px;
}
```
